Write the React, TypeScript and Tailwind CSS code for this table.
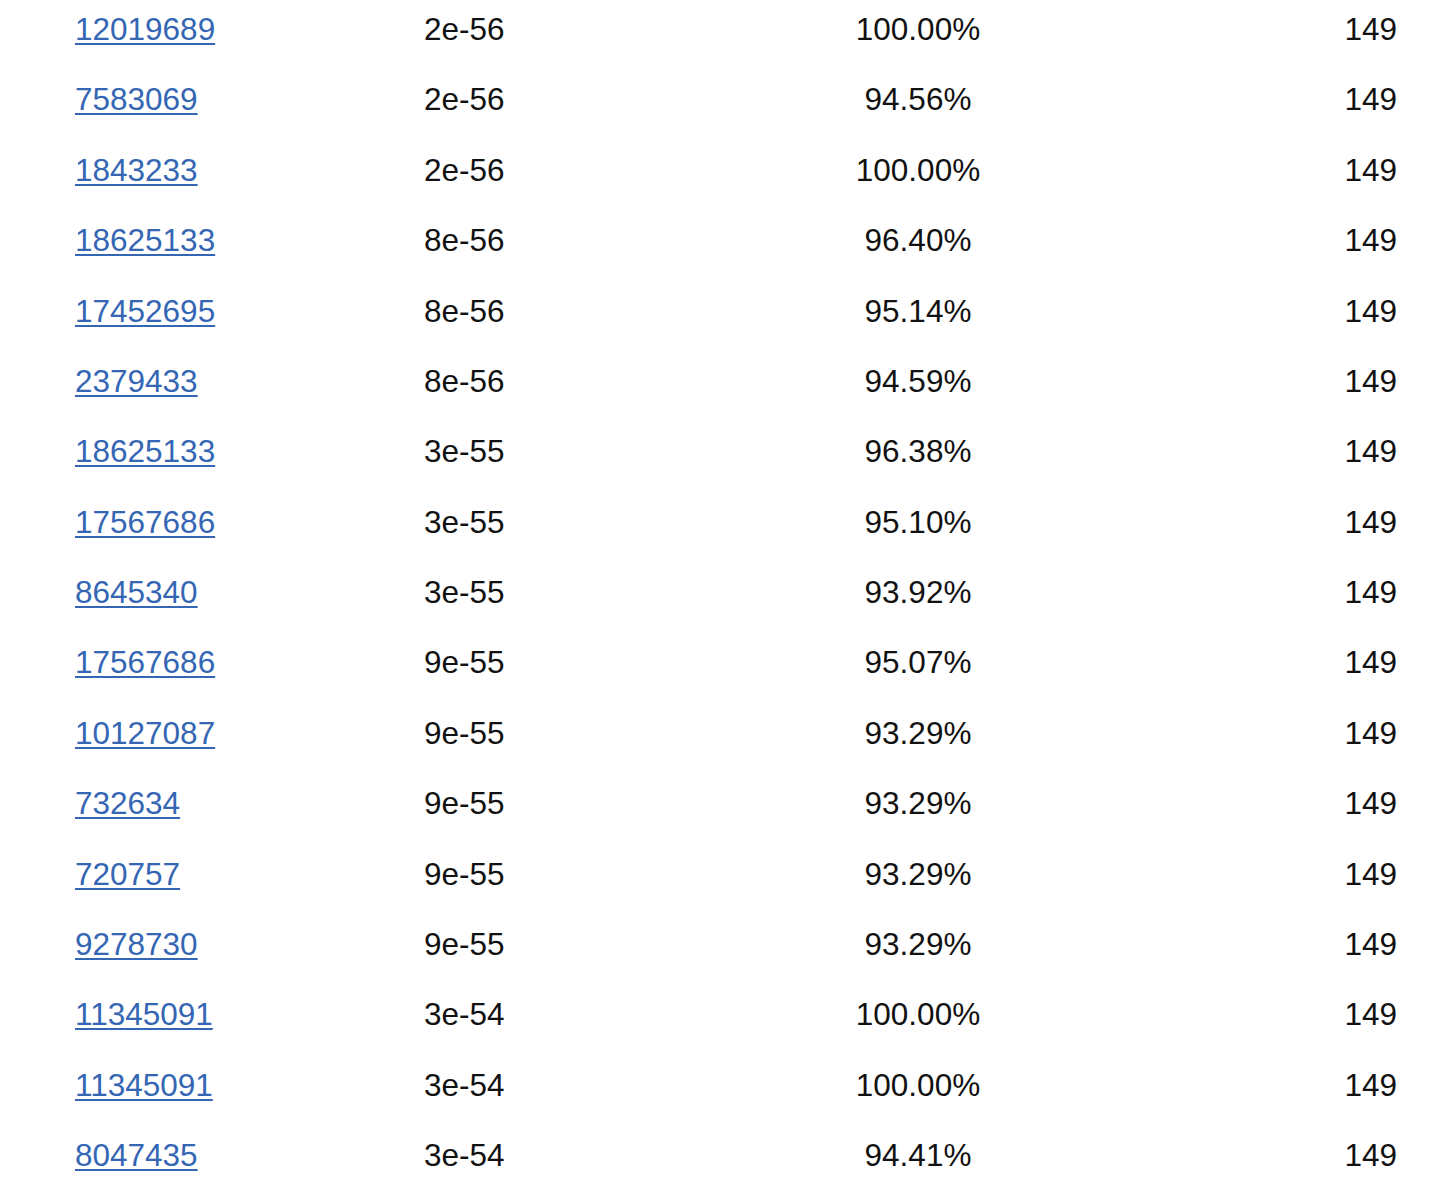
const rows: [string, string, string][] = [
  ["12019689", "2e-56", "100.00%"],
  ["7583069", "2e-56", "94.56%"],
  ["1843233", "2e-56", "100.00%"],
  ["18625133", "8e-56", "96.40%"],
  ["17452695", "8e-56", "95.14%"],
  ["2379433", "8e-56", "94.59%"],
  ["18625133", "3e-55", "96.38%"],
  ["17567686", "3e-55", "95.10%"],
  ["8645340", "3e-55", "93.92%"],
  ["17567686", "9e-55", "95.07%"],
  ["10127087", "9e-55", "93.29%"],
  ["732634", "9e-55", "93.29%"],
  ["720757", "9e-55", "93.29%"],
  ["9278730", "9e-55", "93.29%"],
  ["11345091", "3e-54", "100.00%"],
  ["11345091", "3e-54", "100.00%"],
  ["8047435", "3e-54", "94.41%"],
];

export default function App() {
  return (
    <div className="w-[1456px] h-[1184px] overflow-hidden bg-white">
      <div
        className="-mt-[6px] pl-[75px] pr-[59px] text-[31.5px] text-[#111]"
        style={{ fontFamily: '"Liberation Sans", Arial, sans-serif' }}
      >
        {rows.map(([id, evalue, ident], i) => (
          <div
            key={i}
            className="grid grid-cols-[349px_300px_388px_1fr] h-[70.375px] items-center leading-[70.375px]"
          >
            <a href="#" className="text-[#3466b4] underline decoration-2 underline-offset-[3px] w-fit">
              {id}
            </a>
            <span>{evalue}</span>
            <span className="text-center">{ident}</span>
            <span className="text-right">149</span>
          </div>
        ))}
      </div>
    </div>
  );
}
